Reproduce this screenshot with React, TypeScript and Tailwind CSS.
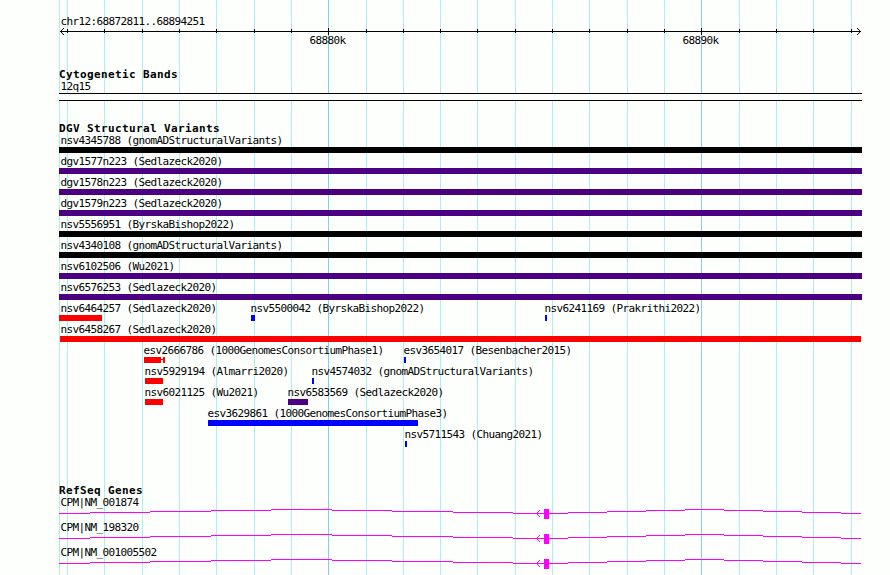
import clsx from "clsx";

type Feature = {
  name: string;
  labelX: number;
  x: number;
  width: number;
  color: string;
  tail?: boolean;
};

const BLACK = "bg-black";
const INDIGO = "bg-[#4b0082]";
const RED = "bg-[#ff0000]";
const BLUE = "bg-[#0000ff]";

const TICKS = [
  67, 104, 142, 179, 216, 254, 291, 328, 366, 403, 440, 477, 515, 552, 589, 627, 664, 701, 739, 776,
  813, 851,
];
const MAJOR_TICKS = [328, 701];

const full = (name: string, color: string): Feature => ({ name, labelX: 60, x: 59, width: 803, color });

const rows: Feature[][] = [
  [full("nsv4345788 (gnomADStructuralVariants)", BLACK)],
  [full("dgv1577n223 (Sedlazeck2020)", INDIGO)],
  [full("dgv1578n223 (Sedlazeck2020)", INDIGO)],
  [full("dgv1579n223 (Sedlazeck2020)", INDIGO)],
  [full("nsv5556951 (ByrskaBishop2022)", BLACK)],
  [full("nsv4340108 (gnomADStructuralVariants)", BLACK)],
  [full("nsv6102506 (Wu2021)", INDIGO)],
  [full("nsv6576253 (Sedlazeck2020)", INDIGO)],
  [
    { name: "nsv6464257 (Sedlazeck2020)", labelX: 60, x: 59, width: 43, color: RED },
    { name: "nsv5500042 (ByrskaBishop2022)", labelX: 250, x: 251, width: 4, color: BLUE },
    { name: "nsv6241169 (Prakrithi2022)", labelX: 544, x: 545, width: 2, color: BLUE },
  ],
  [{ name: "nsv6458267 (Sedlazeck2020)", labelX: 60, x: 60, width: 801, color: RED }],
  [
    { name: "esv2666786 (1000GenomesConsortiumPhase1)", labelX: 143, x: 144, width: 17, color: RED, tail: true },
    { name: "esv3654017 (Besenbacher2015)", labelX: 403, x: 404, width: 2, color: BLUE },
  ],
  [
    { name: "nsv5929194 (Almarri2020)", labelX: 144, x: 145, width: 18, color: RED },
    { name: "nsv4574032 (gnomADStructuralVariants)", labelX: 311, x: 312, width: 2, color: BLUE },
  ],
  [
    { name: "nsv6021125 (Wu2021)", labelX: 144, x: 145, width: 18, color: RED },
    { name: "nsv6583569 (Sedlazeck2020)", labelX: 287, x: 288, width: 20, color: INDIGO },
  ],
  [{ name: "esv3629861 (1000GenomesConsortiumPhase3)", labelX: 207, x: 208, width: 210, color: BLUE }],
  [{ name: "nsv5711543 (Chuang2021)", labelX: 404, x: 405, width: 2, color: BLUE }],
];

const genes = ["CPM|NM_001874", "CPM|NM_198320", "CPM|NM_001005502"];

// [start, end, height above the baseline]
const INTRON = [
  [0, 31, 0],
  [31, 91, 1],
  [91, 152, 2],
  [152, 212, 3],
  [212, 273, 4],
  [273, 333, 3],
  [333, 394, 2],
  [394, 454, 1],
  [454, 509, 0],
  [509, 548, 1],
  [548, 587, 2],
  [587, 626, 3],
  [626, 665, 4],
  [665, 704, 3],
  [704, 743, 2],
  [743, 782, 1],
  [782, 802, 0],
];

const Label = ({ children }: { children: string }) => (
  <span className="block h-3 whitespace-pre indent-[0.5px] text-[11px] leading-3 tracking-[-0.622px]">
    {children}
  </span>
);

const Heading = ({ children }: { children: string }) => (
  <h2 className="h-[13px] whitespace-pre text-[11px] font-bold leading-[13px] tracking-[0.378px]">{children}</h2>
);

const Grid = () => (
  <svg className="absolute inset-0" width="890" height="575" shapeRendering="crispEdges">
    {[59, ...TICKS].map((x) => (
      <rect
        key={x}
        x={x}
        y="0"
        width="1"
        height="575"
        fill={MAJOR_TICKS.includes(x) ? "#87ceeb" : "#afeeee"}
      />
    ))}
  </svg>
);

const Ruler = () => (
  <header className="flex flex-col">
    <div className="pl-px">
      <Label>chr12:68872811..68894251</Label>
    </div>
    <svg className="block" width="803" height="7" viewBox="59 0 803 7" shapeRendering="crispEdges">
      <path d="M60 3h801v1h-801z" />
      {TICKS.map((x) =>
        MAJOR_TICKS.includes(x) ? (
          <rect key={x} x={x} y="0" width="1" height="7" />
        ) : (
          <rect key={x} x={x} y="1" width="1" height="4" />
        )
      )}
      <path d="M61 2h1v1h-1zM62 1h1v1h-1zM63 0h1v1h-1zM61 4h1v1h-1zM62 5h1v1h-1zM63 6h1v1h-1z" />
      <path d="M859 2h1v1h-1zM858 1h1v1h-1zM857 0h1v1h-1zM859 4h1v1h-1zM858 5h1v1h-1zM857 6h1v1h-1z" />
    </svg>
    <div className="grid grid-cols-[373px_373px] pl-[250px]">
      <Label>68880k</Label>
      <Label>68890k</Label>
    </div>
  </header>
);

// one column per feature, each reaching to the start of the next
const columns = (features: Feature[]) =>
  features.map((f, i) => `${(features[i + 1]?.labelX ?? 862) - f.labelX}px`).join(" ");

const VariantRow = ({ features }: { features: Feature[] }) => (
  <div
    className="grid h-[18px]"
    style={{ gridTemplateColumns: columns(features), paddingLeft: features[0].labelX - 59 }}
  >
    {features.map((f) => (
      <div key={f.name} className="flex min-w-0 flex-col">
        <Label>{f.name}</Label>
        <div className="flex" style={{ marginLeft: f.x - f.labelX }}>
          <div className={clsx("h-1.5 shrink-0", f.color)} style={{ width: f.width }} />
          {f.tail && (
            <svg className="shrink-0" width="4" height="6" shapeRendering="crispEdges" fill="#ff0000">
              <path d="M0 2h2v1h-2zM2 0h2v6h-2z" />
            </svg>
          )}
        </div>
      </div>
    ))}
  </div>
);

const GeneRow = ({ name }: { name: string }) => (
  <div className="flex flex-col">
    <div className="pl-px">
      <Label>{name}</Label>
    </div>
    <svg className="block" width="803" height="10" shapeRendering="crispEdges" fill="#ff00ff">
      {INTRON.map(([start, end, rise]) => (
        <rect key={start} x={start} y={4 - rise} width={end - start} height="1" />
      ))}
      <path d="M478 3h1v3h-1zM479 2h1v1h-1zM480 1h1v1h-1zM479 6h1v1h-1zM480 7h1v1h-1z" />
      <rect x="485" y="0" width="5" height="10" />
    </svg>
  </div>
);

export default function App() {
  return (
    <main className="relative h-[575px] w-[890px] overflow-hidden bg-[#fdfffc] font-['DejaVu_Sans_Mono',monospace] text-black">
      <Grid />
      <div className="relative flex flex-col gap-[21px] pl-[59px] pr-7 pt-4">
        <Ruler />
        <section className="flex flex-col">
          <Heading>Cytogenetic Bands</Heading>
          <div className="pl-px">
            <Label>12q15</Label>
          </div>
          <div className="h-2 border-y border-black bg-[#fdfffc]" />
        </section>
        <section className="flex flex-col">
          <Heading>DGV Structural Variants</Heading>
          <div className="flex flex-col gap-[3px]">
            {rows.map((features) => (
              <VariantRow key={features[0].name} features={features} />
            ))}
          </div>
        </section>
        <section className="flex flex-col pt-4">
          <Heading>RefSeq Genes</Heading>
          <div className="flex flex-col gap-[3px]">
            {genes.map((name) => (
              <GeneRow key={name} name={name} />
            ))}
          </div>
        </section>
      </div>
    </main>
  );
}
